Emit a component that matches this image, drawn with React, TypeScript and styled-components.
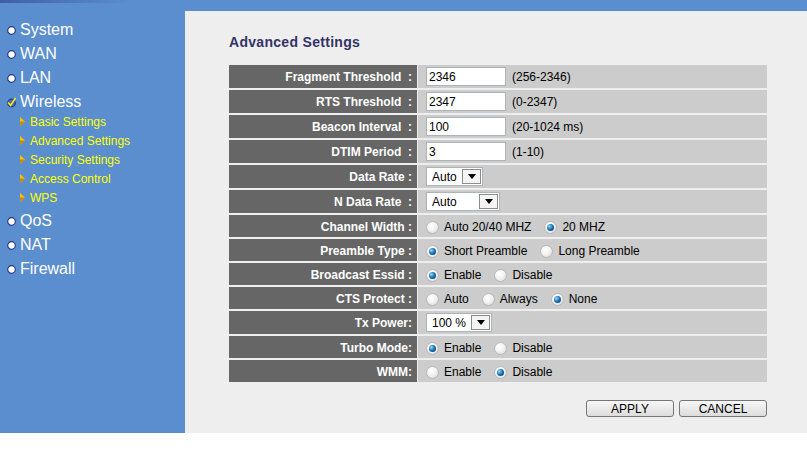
import React from 'react'
import styled, { createGlobalStyle } from 'styled-components'

const blue = '#5a8ecf'

const GlobalStyle = createGlobalStyle`
  html, body {
    margin: 0;
    padding: 0;
    background: #fff;
  }

  body {
    font-family: 'Liberation Sans', Arial, sans-serif;
  }
`

const Page = styled.div`
  display: flex;
  width: 807px;
  height: 433px;
`

/* left navigation */

const Sidebar = styled.nav`
  width: 185px;
  flex-shrink: 0;
  box-sizing: border-box;
  padding: 18px 0 0 7px;
  background: linear-gradient(to right, #3f5ea6, ${blue} 130px) top left / 100% 3px no-repeat,
    ${blue};
`

const MenuItem = styled.div`
  display: flex;
  align-items: center;
  gap: 4px;
  height: 24px;
  color: #fff;
  font-size: 16px;
`

const SubMenu = styled.div`
  margin: -2px 0 2px;
`

const SubItem = styled.div`
  display: flex;
  align-items: center;
  gap: 5px;
  height: 19px;
  padding-left: 13px;
  color: #ffff00;
  font-size: 12px;
`

const Bullet = () => (
  <svg width="9" height="9" viewBox="0 0 9 9">
    <circle cx="4.5" cy="4.5" r="3.8" fill="#fff" stroke="#27368c" strokeWidth="1.2" />
  </svg>
)

const CheckBullet = () => (
  <svg width="9" height="11" viewBox="0 0 9 11">
    <circle cx="4.5" cy="6" r="3.8" fill="#4a6cc0" stroke="#27368c" strokeWidth="1.2" />
    <path d="M1 5.5 L3.6 8.4 L8.6 1" fill="none" stroke="#f4f000" strokeWidth="1.6" />
  </svg>
)

const Arrow = () => (
  <svg width="5" height="9" viewBox="0 0 5 9">
    <path d="M0 0 L5 4.5 L0 9 Z" fill="#f2c200" />
    <path d="M0 4.5 L5 4.5 L0 9 Z" fill="#c98a00" />
  </svg>
)

/* main area */

const Main = styled.main`
  flex: 1;
  display: flex;
  flex-direction: column;
`

const TopBar = styled.div`
  height: 11px;
  background: ${blue};
`

const Panel = styled.section`
  flex: 1;
  background: #eee;
  padding: 23px 40px 0 44px;
`

const Title = styled.h1`
  margin: 0 0 15px;
  font-size: 14px;
  line-height: 16px;
  font-weight: bold;
  letter-spacing: 0.3px;
  color: #333366;
`

const Table = styled.div`
  display: flex;
  flex-direction: column;
  gap: 2px;
`

/* radio rows are one pixel shorter and sit their text a pixel lower */
const Row = styled.div<{ $radio?: boolean }>`
  display: grid;
  grid-template-columns: 188px 1fr;
  column-gap: 1px;
  height: ${(p) => (p.$radio ? 22 : 23)}px;

  > * {
    box-sizing: border-box;
    padding-top: ${(p) => (p.$radio ? 2 : 0)}px;
  }
`

const Label = styled.div`
  display: flex;
  align-items: center;
  justify-content: flex-end;
  padding-right: 5px;
  background: #666;
  color: #fff;
  font-size: 12px;
  font-weight: bold;
  white-space: pre;
`

const Value = styled.div`
  display: flex;
  align-items: center;
  padding-left: 8px;
  background: #ccc;
  font-size: 12px;
  color: #000;
`

const TextInput = styled.input`
  box-sizing: border-box;
  width: 80px;
  height: 19px;
  margin: 0;
  padding: 0 2px;
  border: 1px solid #aeb3b8;
  background: #fff;
  font-family: inherit;
  font-size: 12px;
  color: #000;
`

const Hint = styled.span`
  margin-left: 6px;
`

const SelectBox = styled.div<{ $w: number }>`
  box-sizing: border-box;
  display: flex;
  align-items: center;
  justify-content: space-between;
  width: ${(p) => p.$w}px;
  height: 19px;
  padding-left: 5px;
  border: 1px solid #aeb3b8;
  background: #fff;
`

const SelectButton = styled.span`
  box-sizing: border-box;
  display: flex;
  align-items: center;
  justify-content: center;
  width: 19px;
  height: 15px;
  margin-right: 1px;
  border: 1px solid #8c8c8c;
  background: #f4f4f4;

  &::after {
    content: '';
    border-left: 4px solid transparent;
    border-right: 4px solid transparent;
    border-top: 5px solid #000;
  }
`

const Option = styled.label`
  display: inline-flex;
  align-items: center;
  gap: 5px;
  margin-right: 13px;
`

const RadioDot = styled.span<{ $checked?: boolean }>`
  box-sizing: border-box;
  position: relative;
  width: 13px;
  height: 13px;
  border-radius: 50%;
  border: 1px solid #b9b9b9;
  background: radial-gradient(circle at 40% 35%, #fff 0%, #f3f3f3 45%, #d2d2d2 100%);

  &::after {
    content: '';
    display: ${(p) => (p.$checked ? 'block' : 'none')};
    position: absolute;
    left: 2px;
    top: 2px;
    width: 7px;
    height: 7px;
    border-radius: 50%;
    background: radial-gradient(circle at 35% 35%, #9ad8ff 0%, #1a78b8 45%, #0b2c55 100%);
  }
`

const ButtonRow = styled.div`
  display: flex;
  justify-content: flex-end;
  gap: 5px;
  margin-top: 18px;
`

const Button = styled.button`
  box-sizing: border-box;
  width: 88px;
  height: 17px;
  padding: 0;
  border: 1px solid #767676;
  border-radius: 3px;
  background: linear-gradient(#f7f7f7, #dcdcdc);
  font-family: inherit;
  font-size: 12px;
  color: #000;
`

type Radio = { text: string; checked?: boolean }

const Radios = ({ items }: { items: Radio[] }) => (
  <>
    {items.map((r) => (
      <Option key={r.text}>
        <RadioDot $checked={r.checked} />
        {r.text}
      </Option>
    ))}
  </>
)

const Select = ({ value, width }: { value: string; width: number }) => (
  <SelectBox $w={width}>
    {value}
    <SelectButton />
  </SelectBox>
)

const enableDisable = (on: boolean): Radio[] => [
  { text: 'Enable', checked: on },
  { text: 'Disable', checked: !on },
]

const menu = ['System', 'WAN', 'LAN']
const wirelessSub = ['Basic Settings', 'Advanced Settings', 'Security Settings', 'Access Control', 'WPS']
const menuAfter = ['QoS', 'NAT', 'Firewall']

export default function App() {
  return (
    <>
      <GlobalStyle />
      <Page>
        <Sidebar>
          {menu.map((m) => (
            <MenuItem key={m}>
              <Bullet />
              {m}
            </MenuItem>
          ))}
          <MenuItem>
            <CheckBullet />
            Wireless
          </MenuItem>
          <SubMenu>
            {wirelessSub.map((s) => (
              <SubItem key={s}>
                <Arrow />
                {s}
              </SubItem>
            ))}
          </SubMenu>
          {menuAfter.map((m) => (
            <MenuItem key={m}>
              <Bullet />
              {m}
            </MenuItem>
          ))}
        </Sidebar>

        <Main>
          <TopBar />
          <Panel>
            <Title>Advanced Settings</Title>
            <Table>
              <Row>
                <Label>{'Fragment Threshold  :'}</Label>
                <Value>
                  <TextInput defaultValue="2346" />
                  <Hint>(256-2346)</Hint>
                </Value>
              </Row>
              <Row>
                <Label>{'RTS Threshold  :'}</Label>
                <Value>
                  <TextInput defaultValue="2347" />
                  <Hint>(0-2347)</Hint>
                </Value>
              </Row>
              <Row>
                <Label>{'Beacon Interval  :'}</Label>
                <Value>
                  <TextInput defaultValue="100" />
                  <Hint>(20-1024 ms)</Hint>
                </Value>
              </Row>
              <Row>
                <Label>{'DTIM Period  :'}</Label>
                <Value>
                  <TextInput defaultValue="3" />
                  <Hint>(1-10)</Hint>
                </Value>
              </Row>
              <Row>
                <Label>{'Data Rate :'}</Label>
                <Value>
                  <Select value="Auto" width={57} />
                </Value>
              </Row>
              <Row>
                <Label>{'N Data Rate  :'}</Label>
                <Value>
                  <Select value="Auto" width={74} />
                </Value>
              </Row>
              <Row $radio>
                <Label>{'Channel Width :'}</Label>
                <Value>
                  <Radios items={[{ text: 'Auto 20/40 MHZ' }, { text: '20 MHZ', checked: true }]} />
                </Value>
              </Row>
              <Row $radio>
                <Label>{'Preamble Type :'}</Label>
                <Value>
                  <Radios items={[{ text: 'Short Preamble', checked: true }, { text: 'Long Preamble' }]} />
                </Value>
              </Row>
              <Row $radio>
                <Label>{'Broadcast Essid :'}</Label>
                <Value>
                  <Radios items={enableDisable(true)} />
                </Value>
              </Row>
              <Row $radio>
                <Label>{'CTS Protect :'}</Label>
                <Value>
                  <Radios items={[{ text: 'Auto' }, { text: 'Always' }, { text: 'None', checked: true }]} />
                </Value>
              </Row>
              <Row>
                <Label>Tx Power:</Label>
                <Value>
                  <Select value="100 %" width={66} />
                </Value>
              </Row>
              <Row $radio>
                <Label>Turbo Mode:</Label>
                <Value>
                  <Radios items={enableDisable(true)} />
                </Value>
              </Row>
              <Row $radio>
                <Label>WMM:</Label>
                <Value>
                  <Radios items={enableDisable(false)} />
                </Value>
              </Row>
            </Table>
            <ButtonRow>
              <Button>APPLY</Button>
              <Button>CANCEL</Button>
            </ButtonRow>
          </Panel>
        </Main>
      </Page>
    </>
  )
}
